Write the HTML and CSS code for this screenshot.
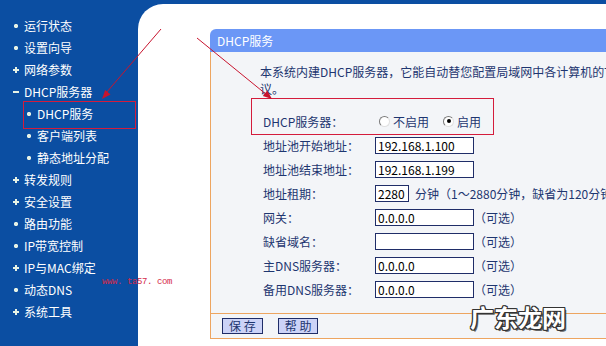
FILE: index.html
```html
<!DOCTYPE html>
<html lang="zh-CN">
<head>
<meta charset="utf-8">
<title>DHCP服务</title>
<link rel="stylesheet" href="styles.css">
</head>
<body>
<div class="page">
  <nav class="side">
    <ul class="menu">
      <li class="item dot">运行状态</li>
      <li class="item dot">设置向导</li>
      <li class="item plus">网络参数</li>
      <li class="item minus">DHCP服务器</li>
      <li class="item sub dot">DHCP服务</li>
      <li class="item sub dot">客户端列表</li>
      <li class="item sub dot">静态地址分配</li>
      <li class="item plus">转发规则</li>
      <li class="item plus">安全设置</li>
      <li class="item dot">路由功能</li>
      <li class="item dot">IP带宽控制</li>
      <li class="item plus">IP与MAC绑定</li>
      <li class="item dot">动态DNS</li>
      <li class="item plus">系统工具</li>
    </ul>
  </nav>
  <main class="main">
    <section class="panel">
      <h1 class="panel-title">DHCP服务</h1>
      <div class="panel-body">
        <p class="intro">本系统内建DHCP服务器，它能自动替您配置局域网中各计算机的TCP/IP协<br>议。</p>
        <div class="form">
          <div class="row">
            <span class="label">DHCP服务器：</span>
            <span class="radio"></span><span class="radio-text">不启用</span>
            <span class="radio checked"></span><span class="radio-text">启用</span>
          </div>
          <div class="row">
            <span class="label">地址池开始地址：</span>
            <span class="input">192.168.1.100</span>
          </div>
          <div class="row">
            <span class="label">地址池结束地址：</span>
            <span class="input">192.168.1.199</span>
          </div>
          <div class="row">
            <span class="label">地址租期：</span>
            <span class="input short">2280</span>
            <span class="hint">分钟（1～2880分钟，缺省为120分钟）</span>
          </div>
          <div class="row">
            <span class="label">网关：</span>
            <span class="input">0.0.0.0</span>
            <span class="opt">（可选）</span>
          </div>
          <div class="row">
            <span class="label">缺省域名：</span>
            <span class="input"></span>
            <span class="opt">（可选）</span>
          </div>
          <div class="row">
            <span class="label">主DNS服务器：</span>
            <span class="input">0.0.0.0</span>
            <span class="opt">（可选）</span>
          </div>
          <div class="row">
            <span class="label">备用DNS服务器：</span>
            <span class="input">0.0.0.0</span>
            <span class="opt">（可选）</span>
          </div>
        </div>
      </div>
      <div class="panel-foot">
        <button class="btn">保 存</button>
        <button class="btn">帮 助</button>
      </div>
    </section>
  </main>
</div>

<svg class="annot" width="606" height="346" viewBox="0 0 606 346">
  <rect x="23.5" y="101.5" width="112" height="27" fill="none" stroke="#d41c3c" stroke-width="1"/>
  <rect x="251.5" y="98.5" width="242" height="36" fill="none" stroke="#d41c3c" stroke-width="1"/>
  <line x1="161" y1="29" x2="106" y2="93" stroke="#c8142e" stroke-width="1"/>
  <polygon points="102,99 110.5,94.4 105.2,89.9" fill="#c8142e"/>
  <line x1="197" y1="38" x2="267" y2="95" stroke="#c8142e" stroke-width="1"/>
  <polygon points="272,99 262.8,96 267.3,90.6" fill="#c8142e"/>
</svg>
<div class="url">www. ta57. com</div>
<div class="mark">广东龙网</div>
</body>
</html>
```

FILE: styles.css
```css
html, body {
  margin: 0;
  padding: 0;
  width: 606px;
  height: 346px;
  overflow: hidden;
  background: #0b4ea2;
  font-family: "Noto Sans CJK SC", "Noto Sans", sans-serif;
  font-size: 12px;
}

.page {
  display: flex;
  width: 606px;
  height: 346px;
}

.side {
  width: 138px;
  flex: none;
}

.menu {
  list-style: none;
  margin: 0;
  padding: 15px 0 0 13px;
}

.item {
  display: flex;
  align-items: center;
  height: 22px;
  line-height: 22px;
  color: #ffffff;
  white-space: nowrap;
}

.item::before {
  content: "";
  width: 6px;
  height: 6px;
  margin-right: 5px;
  flex: none;
}

.item.sub {
  padding-left: 13px;
}

.item.dot::before {
  background: radial-gradient(circle at 50% 50%, #e6f2e6 0, #e6f2e6 1.8px, transparent 2.4px);
}

.item.plus::before {
  background:
    linear-gradient(#e6f2e6, #e6f2e6) center / 6px 2px no-repeat,
    linear-gradient(#e6f2e6, #e6f2e6) center / 2px 6px no-repeat;
}

.item.minus::before {
  background: linear-gradient(#e6f2e6, #e6f2e6) center / 6px 2px no-repeat;
}

.main {
  flex: 1;
  margin-top: 4px;
  background: #ffffff;
  border-top-left-radius: 25px;
  padding: 25px 0 0 72px;
  overflow: hidden;
}

.panel {
  width: 470px;
}

.panel-title {
  margin: 0;
  height: 23px;
  line-height: 23px;
  padding-left: 7px;
  background: #6b97f6;
  color: #ffffff;
  font-size: 12px;
  font-weight: normal;
  border-top-left-radius: 6px;
}

.panel-body {
  background: #f3f5f8;
  border-left: 1px solid #eda560;
  padding: 11px 0 12px 0;
}

.intro {
  margin: 0 0 12px 49px;
  line-height: 17px;
  color: #1e3670;
  white-space: nowrap;
}

.form {
  padding-left: 52px;
}

.row {
  display: flex;
  align-items: center;
  height: 24px;
  color: #1e3670;
  white-space: nowrap;
}

.label {
  width: 112px;
  flex: none;
}

.input {
  box-sizing: border-box;
  width: 99px;
  height: 17px;
  line-height: 15px;
  padding: 0 2px;
  border: 1px solid #1f2d68;
  background: #ffffff;
  color: #000000;
  flex: none;
}

.input.short {
  width: 34px;
}

.hint {
  margin-left: 6px;
}

.opt {
  margin-left: 0;
}

.radio {
  box-sizing: border-box;
  width: 11px;
  height: 11px;
  border-radius: 50%;
  border: 1px solid;
  border-color: #7a7a7a #e0e0e0 #e0e0e0 #7a7a7a;
  background: #ffffff;
  margin-left: 4px;
  flex: none;
  position: relative;
}

.radio.checked::after {
  content: "";
  position: absolute;
  left: 2.5px;
  top: 2.5px;
  width: 4px;
  height: 4px;
  border-radius: 50%;
  background: #000000;
}

.radio + .radio-text {
  margin-left: 3px;
}

.radio-text + .radio {
  margin-left: 14px;
}

.panel-foot {
  display: flex;
  align-items: center;
  gap: 15px;
  height: 24px;
  padding-left: 11px;
  background: #f3f5f8;
  border-left: 1px solid #eda560;
  border-top: 1px solid #eda560;
  border-bottom: 1px solid #eda560;
}

.btn {
  height: 16px;
  padding: 0 6px;
  margin: 0;
  border: 1px solid #1f2d68;
  background: #ccd3f7;
  color: #1e3670;
  font-family: "Noto Sans CJK SC", sans-serif;
  font-size: 12px;
  line-height: 14px;
}

.annot {
  position: absolute;
  left: 0;
  top: 0;
  pointer-events: none;
}

.url {
  position: absolute;
  left: 102px;
  top: 276px;
  font-family: "Liberation Mono", monospace;
  font-size: 9px;
  letter-spacing: -0.4px;
  line-height: 12px;
  color: #d42a4a;
}

.mark {
  position: absolute;
  left: 470px;
  top: 304px;
  font-family: "Noto Sans CJK SC", sans-serif;
  font-size: 24px;
  font-weight: bold;
  line-height: 26px;
  color: #ffffff;
  text-shadow:
    -1px -1px 0 #333333, 1px -1px 0 #333333,
    -1px 1px 0 #333333, 1px 1px 0 #333333,
    0 -1px 0 #333333, 0 1px 0 #333333,
    -1px 0 0 #333333, 1px 0 0 #333333,
    2px 2px 0 #666666;
}
```
